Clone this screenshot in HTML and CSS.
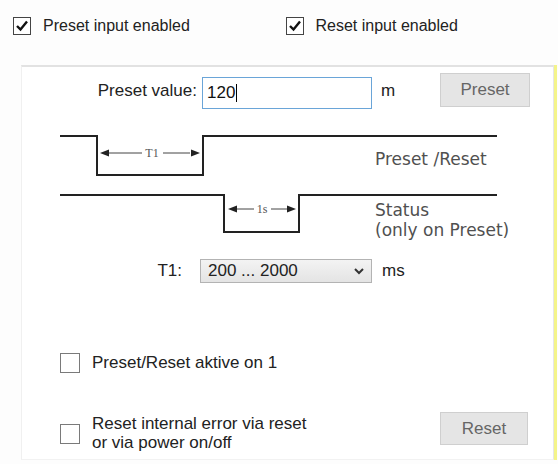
FILE: index.html
```html
<!DOCTYPE html>
<html>
<head>
    <title>Preset / Reset</title>
    <link rel="stylesheet" href="styles.css">
</head>
<body>
    <div class="options">
        <label class="check">
            <span class="box dark"><svg width="18" height="18" viewBox="0 0 18 18"><polyline points="4,9 7.5,12.5 14,4.5" fill="none" stroke="#111" stroke-width="2.4"/></svg></span>
            Preset input enabled
        </label>
        <label class="check">
            <span class="box dark"><svg width="18" height="18" viewBox="0 0 18 18"><polyline points="4,9 7.5,12.5 14,4.5" fill="none" stroke="#111" stroke-width="2.4"/></svg></span>
            Reset input enabled
        </label>
    </div>

    <div class="panel">
        <div class="row preset-row">
            <span class="caption">Preset value:</span>
            <div class="textbox">120<span class="caret"></span></div>
            <span class="unit">m</span>
            <button class="btn preset-btn">Preset</button>
        </div>

        <svg class="timing" width="532" height="130" viewBox="0 0 532 130">
            <polyline points="38,16 75,16 75,55 181,55 181,16 475,16" fill="none" stroke="#222" stroke-width="2"/>
            <line x1="86" y1="33" x2="120" y2="33" stroke="#444" stroke-width="1"/>
            <line x1="141" y1="33" x2="168" y2="33" stroke="#444" stroke-width="1"/>
            <polygon points="78,33 87,29.5 87,36.5" fill="#222"/>
            <polygon points="178,33 169,29.5 169,36.5" fill="#222"/>
            <text x="130" y="37" class="small">T1</text>

            <polyline points="38,75 202,75 202,112 277,112 277,75 475,75" fill="none" stroke="#222" stroke-width="2"/>
            <line x1="214" y1="89" x2="232" y2="89" stroke="#444" stroke-width="1"/>
            <line x1="249" y1="89" x2="266" y2="89" stroke="#444" stroke-width="1"/>
            <polygon points="206,89 215,85.5 215,92.5" fill="#222"/>
            <polygon points="274,89 265,85.5 265,92.5" fill="#222"/>
            <text x="240" y="93" class="small">1s</text>

            <text x="353" y="45" class="label">Preset /Reset</text>
            <text x="353" y="96" class="label">Status</text>
            <text x="353" y="116" class="label">(only on Preset)</text>
        </svg>

        <div class="row t1-row">
            <span class="caption short">T1:</span>
            <div class="select">
                200 ... 2000
                <svg width="10" height="7" viewBox="0 0 10 7"><polyline points="1,1 5,5 9,1" fill="none" stroke="#333" stroke-width="2"/></svg>
            </div>
            <span class="unit">ms</span>
        </div>

        <label class="check aktive">
            <span class="box"></span>
            Preset/Reset aktive on 1
        </label>

        <div class="reset-row">
            <label class="check">
                <span class="box"></span>
                <span class="two-lines">Reset internal error via reset<br>or via power on/off</span>
            </label>
            <button class="btn reset-btn">Reset</button>
        </div>
    </div>
</body>
</html>
```

FILE: styles.css
```css
body {
    margin: 0;
    background-color: #fdfdfd;
    font-family: "Liberation Sans", Arial, sans-serif;
    color: #222;
}

.options {
    display: flex;
    align-items: flex-start;
    height: 65px;
    box-sizing: border-box;
    padding: 17px 0 0 13px;
    font-size: 16px;
}

.options .check {
    width: 290px;
}

.check {
    display: flex;
    align-items: center;
    gap: 12px;
}

.box {
    display: block;
    width: 18px;
    height: 18px;
    box-sizing: border-box;
    border: 1px solid #7a7a7a;
    background-color: #fff;
}

.box.dark {
    border-color: #444;
}

.box svg {
    display: block;
    margin: -1px;
}

.panel {
    margin-left: 21px;
    width: 533px;
    height: 395px;
    box-sizing: border-box;
    background-color: #fff;
    border-top: 2px solid #e2e2e2;
    border-left: 1px solid #f0f0f0;
    border-right: 1px solid #e6e6e6;
    border-bottom: 1px solid #f2f2f2;
    box-shadow: 3px 0 0 #f4f48a;
    font-size: 17px;
}

.row {
    display: flex;
    align-items: center;
}

.caption {
    width: 175px;
    text-align: right;
}

.caption.short {
    width: 160px;
}

.preset-row {
    margin-top: 6px;
    height: 36px;
}

.textbox {
    align-self: flex-end;
    margin-left: 5px;
    width: 170px;
    height: 32px;
    box-sizing: border-box;
    border: 1px solid #6aa5d8;
    padding-left: 4px;
    display: flex;
    align-items: center;
    color: #111;
}

.caret {
    display: inline-block;
    width: 1px;
    height: 18px;
    background-color: #000;
    margin-left: 1px;
}

.unit {
    margin-left: 9px;
    width: 59px;
}

.btn {
    font-family: "Liberation Sans", Arial, sans-serif;
    font-size: 17px;
    color: #666;
    background-color: #e5e5e5;
    border: 1px solid #cfcfcf;
    padding: 0;
}

.preset-btn {
    align-self: flex-start;
    width: 90px;
    height: 34px;
}

.timing {
    display: block;
    margin-top: 11px;
}

.timing .small {
    font-family: "Liberation Serif", serif;
    font-size: 12px;
    fill: #555;
    text-anchor: middle;
}

.timing .label {
    font-family: "DejaVu Sans", sans-serif;
    font-size: 17px;
    fill: #505050;
}

.t1-row {
    margin-top: 9px;
    height: 24px;
}

.select {
    margin-left: 18px;
    width: 172px;
    height: 24px;
    box-sizing: border-box;
    border: 1px solid #b3b3b3;
    background: linear-gradient(#f3f3f3, #e4e4e4);
    padding: 0 7px 0 7px;
    display: flex;
    align-items: center;
    justify-content: space-between;
}

.t1-row .unit {
    margin-left: 10px;
}

.aktive {
    margin: 70px 0 0 38px;
    height: 20px;
}

.aktive .box,
.reset-row .box {
    width: 20px;
    height: 20px;
}

.reset-row {
    display: flex;
    align-items: center;
    margin: 42px 0 0 38px;
    width: 468px;
}

.two-lines {
    line-height: 18.5px;
}

.reset-btn {
    align-self: flex-start;
    margin-top: -3px;
    margin-left: auto;
    width: 88px;
    height: 33px;
}
```
